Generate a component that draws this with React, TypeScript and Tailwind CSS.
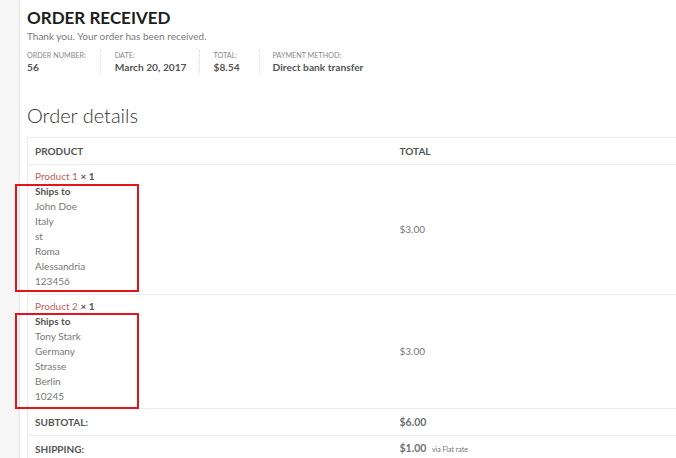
import React from "react";

const InfoItem = ({ label, value, cls }: { label: string; value: string; cls: string }) => (
  <li className={`flex flex-col ${cls}`}>
    <span className="text-[7.2px] uppercase text-[#888] leading-[11px]">{label}</span>
    <strong className="text-[10.2px] font-bold text-[#555] leading-[13px]">{value}</strong>
  </li>
);

const Lines = ({ lines }: { lines: string[] }) => (
  <>
    {lines.map((l, i) => (
      <div key={i} className={i === 0 ? "font-bold text-[#555]" : ""}>
        {l}
      </div>
    ))}
  </>
);

export default function App() {
  return (
    <div
      className="flex min-h-[458px] w-[676px] overflow-hidden bg-white"
      style={{ fontFamily: "Lato, 'Open Sans', sans-serif" }}
    >
      <div className="w-[20px] shrink-0 bg-[#f6f6f6] border-r border-[#e6e6e6]" />
      <div className="flex-1 pl-[7px] pt-[8px]">
        <h1 className="text-[17px] font-bold leading-[20px] text-[#1d1d1d]">ORDER RECEIVED</h1>
        <p className="mt-[2px] text-[10px] leading-[13px] text-[#7a7a7a]">Thank you. Your order has been received.</p>
        <ul className="mt-[7px] flex">
          <InfoItem label="Order number:" value="56" cls="border-r border-dotted border-[#d8d8d8] pr-[14px] mr-[14px]" />
          <InfoItem label="Date:" value="March 20, 2017" cls="border-r border-dotted border-[#d8d8d8] pr-[12px] mr-[14px]" />
          <InfoItem label="Total:" value="$8.54" cls="border-r border-dotted border-[#d8d8d8] pr-[19px] mr-[13px]" />
          <InfoItem label="Payment method:" value="Direct bank transfer" cls="" />
        </ul>
        <h2 className="mt-[29px] text-[20px] font-light leading-[24px] text-[#333]">Order details</h2>
        <table className="mt-[10px] w-[700px] border-collapse border border-[#ebebeb] text-[10px] text-[#777]">
          <thead>
            <tr className="border-b border-[#ebebeb]">
              <th className="w-[364px] h-[27px] pl-[7px] pr-[8px] text-left text-[10px] font-bold uppercase text-[#555]">Product</th>
              <th className="h-[27px] px-[8px] text-left text-[10px] font-bold uppercase text-[#555]">Total</th>
            </tr>
          </thead>
          <tbody className="leading-[15px]">
            <tr className="border-b border-[#ebebeb]">
              <td className="pl-[7px] pr-[8px] pt-[4px] pb-[5px] align-top">
                <div>
                  <span className="text-[#c0605e]">Product 1</span>{" "}
                  <strong className="text-[#555]">× 1</strong>
                </div>
                <Lines lines={["Ships to", "John Doe", "Italy", "st", "Roma", "Alessandria", "123456"]} />
              </td>
              <td className="px-[8px] py-[4px] align-middle">$3.00</td>
            </tr>
            <tr className="border-b border-[#ebebeb]">
              <td className="pl-[7px] pr-[8px] py-[4px] align-top">
                <div>
                  <span className="text-[#c0605e]">Product 2</span>{" "}
                  <strong className="text-[#555]">× 1</strong>
                </div>
                <Lines lines={["Ships to", "Tony Stark", "Germany", "Strasse", "Berlin", "10245"]} />
              </td>
              <td className="px-[8px] py-[4px] align-middle">$3.00</td>
            </tr>
            <tr className="border-b border-[#ebebeb]">
              <th className="h-[27px] pl-[7px] pr-[8px] text-left text-[10px] font-bold uppercase text-[#555]">Subtotal:</th>
              <td className="h-[27px] px-[8px] text-[10.5px] font-bold text-[#707070]">$6.00</td>
            </tr>
            <tr className="border-b border-[#ebebeb]">
              <th className="h-[27px] pl-[7px] pr-[8px] text-left text-[10px] font-bold uppercase text-[#555]">Shipping:</th>
              <td className="h-[27px] px-[8px] text-[10.5px] font-bold text-[#707070]">
                $1.00 <small className="ml-[3px] text-[7px] font-normal">via Flat rate</small>
              </td>
            </tr>
          </tbody>
        </table>
      </div>
      <div className="pointer-events-none absolute left-[15px] top-[184px] h-[108px] w-[124px] border-2 border-[#e5131b]" />
      <div className="pointer-events-none absolute left-[15px] top-[313px] h-[96px] w-[124px] border-2 border-[#e5131b]" />
    </div>
  );
}
